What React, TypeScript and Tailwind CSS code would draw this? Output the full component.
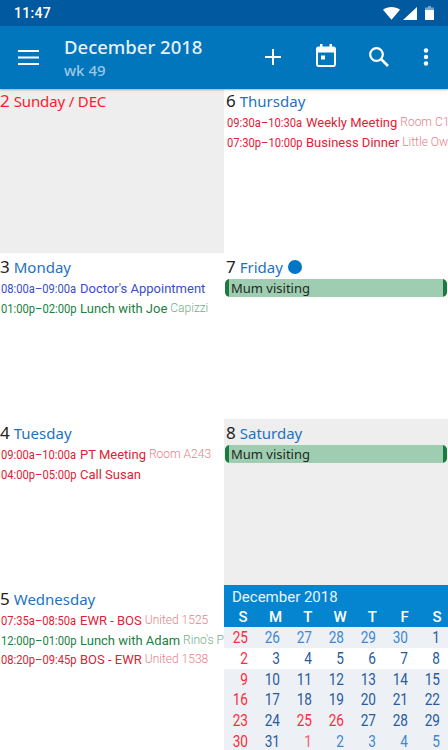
const sans = "font-['Noto_Sans',sans-serif]";
const roboto = "font-['Roboto',sans-serif]";

type Ev = { time: string; title: string; place?: string; tone: 'red' | 'blue' | 'green' };

const tones = {
  red: { main: 'text-[#dc2435]', light: 'text-[#e67f8a]' },
  blue: { main: 'text-[#3a4fc4]', light: 'text-[#8f9ade]' },
  green: { main: 'text-[#1c8044]', light: 'text-[#6fb088]' },
};

function DayHead({ num, name, red }: { num: number; name: string; red?: boolean }) {
  return (
    <div className={`${sans} flex items-baseline h-[25px] whitespace-nowrap`}>
      <span className={`text-[17px] leading-[25px] ${red ? 'text-[#fb1c2c]' : 'text-[#222222]'}`}>{num}</span>
      <span className={`ml-[4px] text-[15px] leading-[25px] ${red ? 'text-[#fb1c2c] tracking-[-0.15px]' : 'text-[#1f72bd]'}`}>{name}</span>
    </div>
  );
}

function EventRow({ ev }: { ev: Ev }) {
  const t = tones[ev.tone];
  return (
    <div className={`${roboto} flex h-[19.5px] pl-px text-[13px] leading-[19.5px] whitespace-nowrap overflow-hidden ${t.main}`}>
      <span className="inline-block w-[79px] shrink-0 origin-left scale-x-[0.86]">{ev.time}</span>
      <span>{ev.title}</span>
      {ev.place && <span className={`ml-[3px] text-[12px] font-light ${t.light}`}>{ev.place}</span>}
    </div>
  );
}

function AllDay() {
  return (
    <div className={`${sans} relative -ml-px mr-px h-[18px] bg-[#9fcdb1] rounded-[5px] overflow-hidden text-[13px] leading-[18px] text-[#1d2a22] pl-[6px]`}>
      <div className="absolute left-0 top-0 bottom-0 w-[4px] bg-[#1a7a40]" />
      <div className="absolute right-0 top-0 bottom-0 w-[4px] bg-[#1a7a40]" />
      Mum visiting
    </div>
  );
}

const weeks = [
  [25, 26, 27, 28, 29, 30, 1],
  [2, 3, 4, 5, 6, 7, 8],
  [9, 10, 11, 12, 13, 14, 15],
  [16, 17, 18, 19, 20, 21, 22],
  [23, 24, 25, 26, 27, 28, 29],
  [30, 31, 1, 2, 3, 4, 5],
];

function dayColor(w: number, d: number) {
  const isHoliday = w === 4 && (d === 2 || d === 3);
  if (d === 0 || isHoliday) return 'text-[#fb2c3c]';
  if (w === 5 && d === 2) return 'text-[#f4606c]';
  if (w === 0 && d < 6) return 'text-[#3d87cf]';
  if (w === 5 && d > 2) return 'text-[#3d87cf]';
  return 'text-[#2a5a9c]';
}

function MiniMonth() {
  return (
    <div className={`${roboto} flex flex-col`}>
      <div className="bg-[#0584d0] text-white h-[42px] shrink-0">
        <div className="pl-[8px] h-[23px] text-[15px] leading-[24px] text-[#e9f4fb]">December 2018</div>
        <div className="grid grid-cols-[repeat(7,32.3px)] h-[18px] pl-[3px] text-[15px] font-medium leading-[18px] text-center">
          {['S', 'M', 'T', 'W', 'T', 'F', 'S'].map((d, i) => (
            <div key={i}>{d}</div>
          ))}
        </div>
      </div>
      {weeks.map((w, wi) => (
        <div
          key={wi}
          className={`grid grid-cols-7 h-[20.8px] shrink-0 pt-px text-[16px] leading-[20px] text-right ${wi === 1 ? 'bg-white' : 'bg-[#edf1f6]'}`}
        >
          {w.map((n, di) => (
            <div key={di} className={`pr-[8px] ${dayColor(wi, di)}`}>
              <span className="inline-block origin-right scale-x-[0.85]">{n}</span>
            </div>
          ))}
        </div>
      ))}
    </div>
  );
}

export default function App() {
  return (
    <div className="w-[448px] h-[750px] overflow-hidden bg-white flex flex-col">
      {/* status bar */}
      <div className={`${roboto} h-[26px] shrink-0 bg-[#015a9f] text-white flex items-center pl-[14px] pr-[14px]`}>
        <span className="text-[14px] font-medium tracking-[0.3px]">11:47</span>
        <div className="ml-auto flex items-center gap-[3px]">
          <svg width="17" height="13" viewBox="0 0 17 13"><path d="M0 2.8 C4.8 -0.9 12.2 -0.9 17 2.8 L8.5 12.8 Z" fill="#fff" /></svg>
          <svg width="14" height="13" viewBox="0 0 14 13"><path d="M14 0 V13 H0 Z" fill="#fff" /></svg>
          <svg className="ml-[5px]" width="9" height="14" viewBox="0 0 9 14">
            <path d="M3 0 H6 V1.5 H9 V14 H0 V1.5 H3 Z" fill="#fff" fillOpacity="0.45" />
            <path d="M0 4 H9 V14 H0 Z" fill="#fff" />
          </svg>
        </div>
      </div>

      {/* toolbar */}
      <div className="h-[63px] shrink-0 bg-[#0276bd] flex items-center relative z-10 shadow-[0_1px_2px_rgba(0,0,0,0.3)]">
        <svg className="ml-[18px]" width="22" height="15" viewBox="0 0 22 15" fill="#fff">
          <rect y="0" width="21" height="2" />
          <rect y="6.5" width="21" height="2" />
          <rect y="13" width="21" height="2" />
        </svg>
        <div className={`${sans} ml-[24px] -mt-[1px]`}>
          <div className="text-[18.5px] font-medium leading-[26px] text-[#e6f1f8]">December 2018</div>
          <div className="text-[15px] font-medium leading-[20px] text-[#9cc8e4]">wk 49</div>
        </div>
        <svg className="absolute left-[265px] top-[23px]" width="16" height="16" viewBox="0 0 16 16" fill="#fff">
          <rect x="7" y="0" width="2" height="16" />
          <rect x="0" y="7" width="16" height="2" />
        </svg>
        <svg className="absolute left-[315px] top-[18px]" width="22" height="24" viewBox="0 0 22 24" fill="#fff">
          <path fillRule="evenodd" d="M5 0 H7.5 V2.5 H14.5 V0 H17 V2.5 H18.5 C20 2.5 21 3.5 21 5 V20.5 C21 22 20 23 18.5 23 H3.5 C2 23 1 22 1 20.5 V5 C1 3.5 2 2.5 3.5 2.5 H5 Z M3 8.5 V20.5 C3 20.8 3.2 21 3.5 21 H18.5 C18.8 21 19 20.8 19 20.5 V8.5 Z" />
          <rect x="6" y="11.5" width="4" height="4" />
        </svg>
        <svg className="absolute left-[368px] top-[20px]" width="22" height="22" viewBox="0 0 22 22" fill="none" stroke="#fff" strokeWidth="2.2">
          <circle cx="8.5" cy="8.5" r="6.3" />
          <path d="M13 13 L20 20" strokeWidth="2.6" />
        </svg>
        <svg className="absolute left-[422px] top-[22px]" width="8" height="18" viewBox="0 0 8 18" fill="#fff">
          <circle cx="4" cy="2.5" r="2.2" />
          <circle cx="4" cy="9" r="2.2" />
          <circle cx="4" cy="15.5" r="2.2" />
        </svg>
      </div>

      {/* week grid */}
      <div className="flex-1 grid grid-cols-2 grid-rows-[164px_166px_166px_165px] min-h-0">
        <div className="bg-[#eeeeee] overflow-hidden">
          <div className="-mt-px">
            <DayHead num={2} name="Sunday / DEC" red />
          </div>
        </div>
        <div className="pl-[2px] overflow-hidden">
          <div className="-mt-px">
            <DayHead num={6} name="Thursday" />
          </div>
          <EventRow ev={{ time: '09:30a–10:30a', title: 'Weekly Meeting', place: 'Room C132', tone: 'red' }} />
          <EventRow ev={{ time: '07:30p–10:00p', title: 'Business Dinner', place: 'Little Owl', tone: 'red' }} />
        </div>
        <div className="pt-px">
          <DayHead num={3} name="Monday" />
          <EventRow ev={{ time: '08:00a–09:00a', title: "Doctor's Appointment", tone: 'blue' }} />
          <EventRow ev={{ time: '01:00p–02:00p', title: 'Lunch with Joe', place: 'Capizzi', tone: 'green' }} />
        </div>
        <div className="pl-[2px] pt-px">
          <div className="flex items-center">
            <DayHead num={7} name="Friday" />
            <div className="ml-[5px] w-[14px] h-[14px] rounded-full bg-[#0276c6]" />
          </div>
          <AllDay />
        </div>
        <div className="pt-px">
          <DayHead num={4} name="Tuesday" />
          <EventRow ev={{ time: '09:00a–10:00a', title: 'PT Meeting', place: 'Room A243', tone: 'red' }} />
          <EventRow ev={{ time: '04:00p–05:00p', title: 'Call Susan', tone: 'red' }} />
        </div>
        <div className="pl-[2px] pt-px bg-[#eeeeee]">
          <DayHead num={8} name="Saturday" />
          <AllDay />
        </div>
        <div className="pt-px overflow-hidden">
          <DayHead num={5} name="Wednesday" />
          <EventRow ev={{ time: '07:35a–08:50a', title: 'EWR - BOS', place: 'United 1525', tone: 'red' }} />
          <EventRow ev={{ time: '12:00p–01:00p', title: 'Lunch with Adam', place: "Rino's Place", tone: 'green' }} />
          <EventRow ev={{ time: '08:20p–09:45p', title: 'BOS - EWR', place: 'United 1538', tone: 'red' }} />
        </div>
        <div className="bg-[#eeeeee] overflow-hidden">
          <MiniMonth />
        </div>
      </div>
    </div>
  );
}
